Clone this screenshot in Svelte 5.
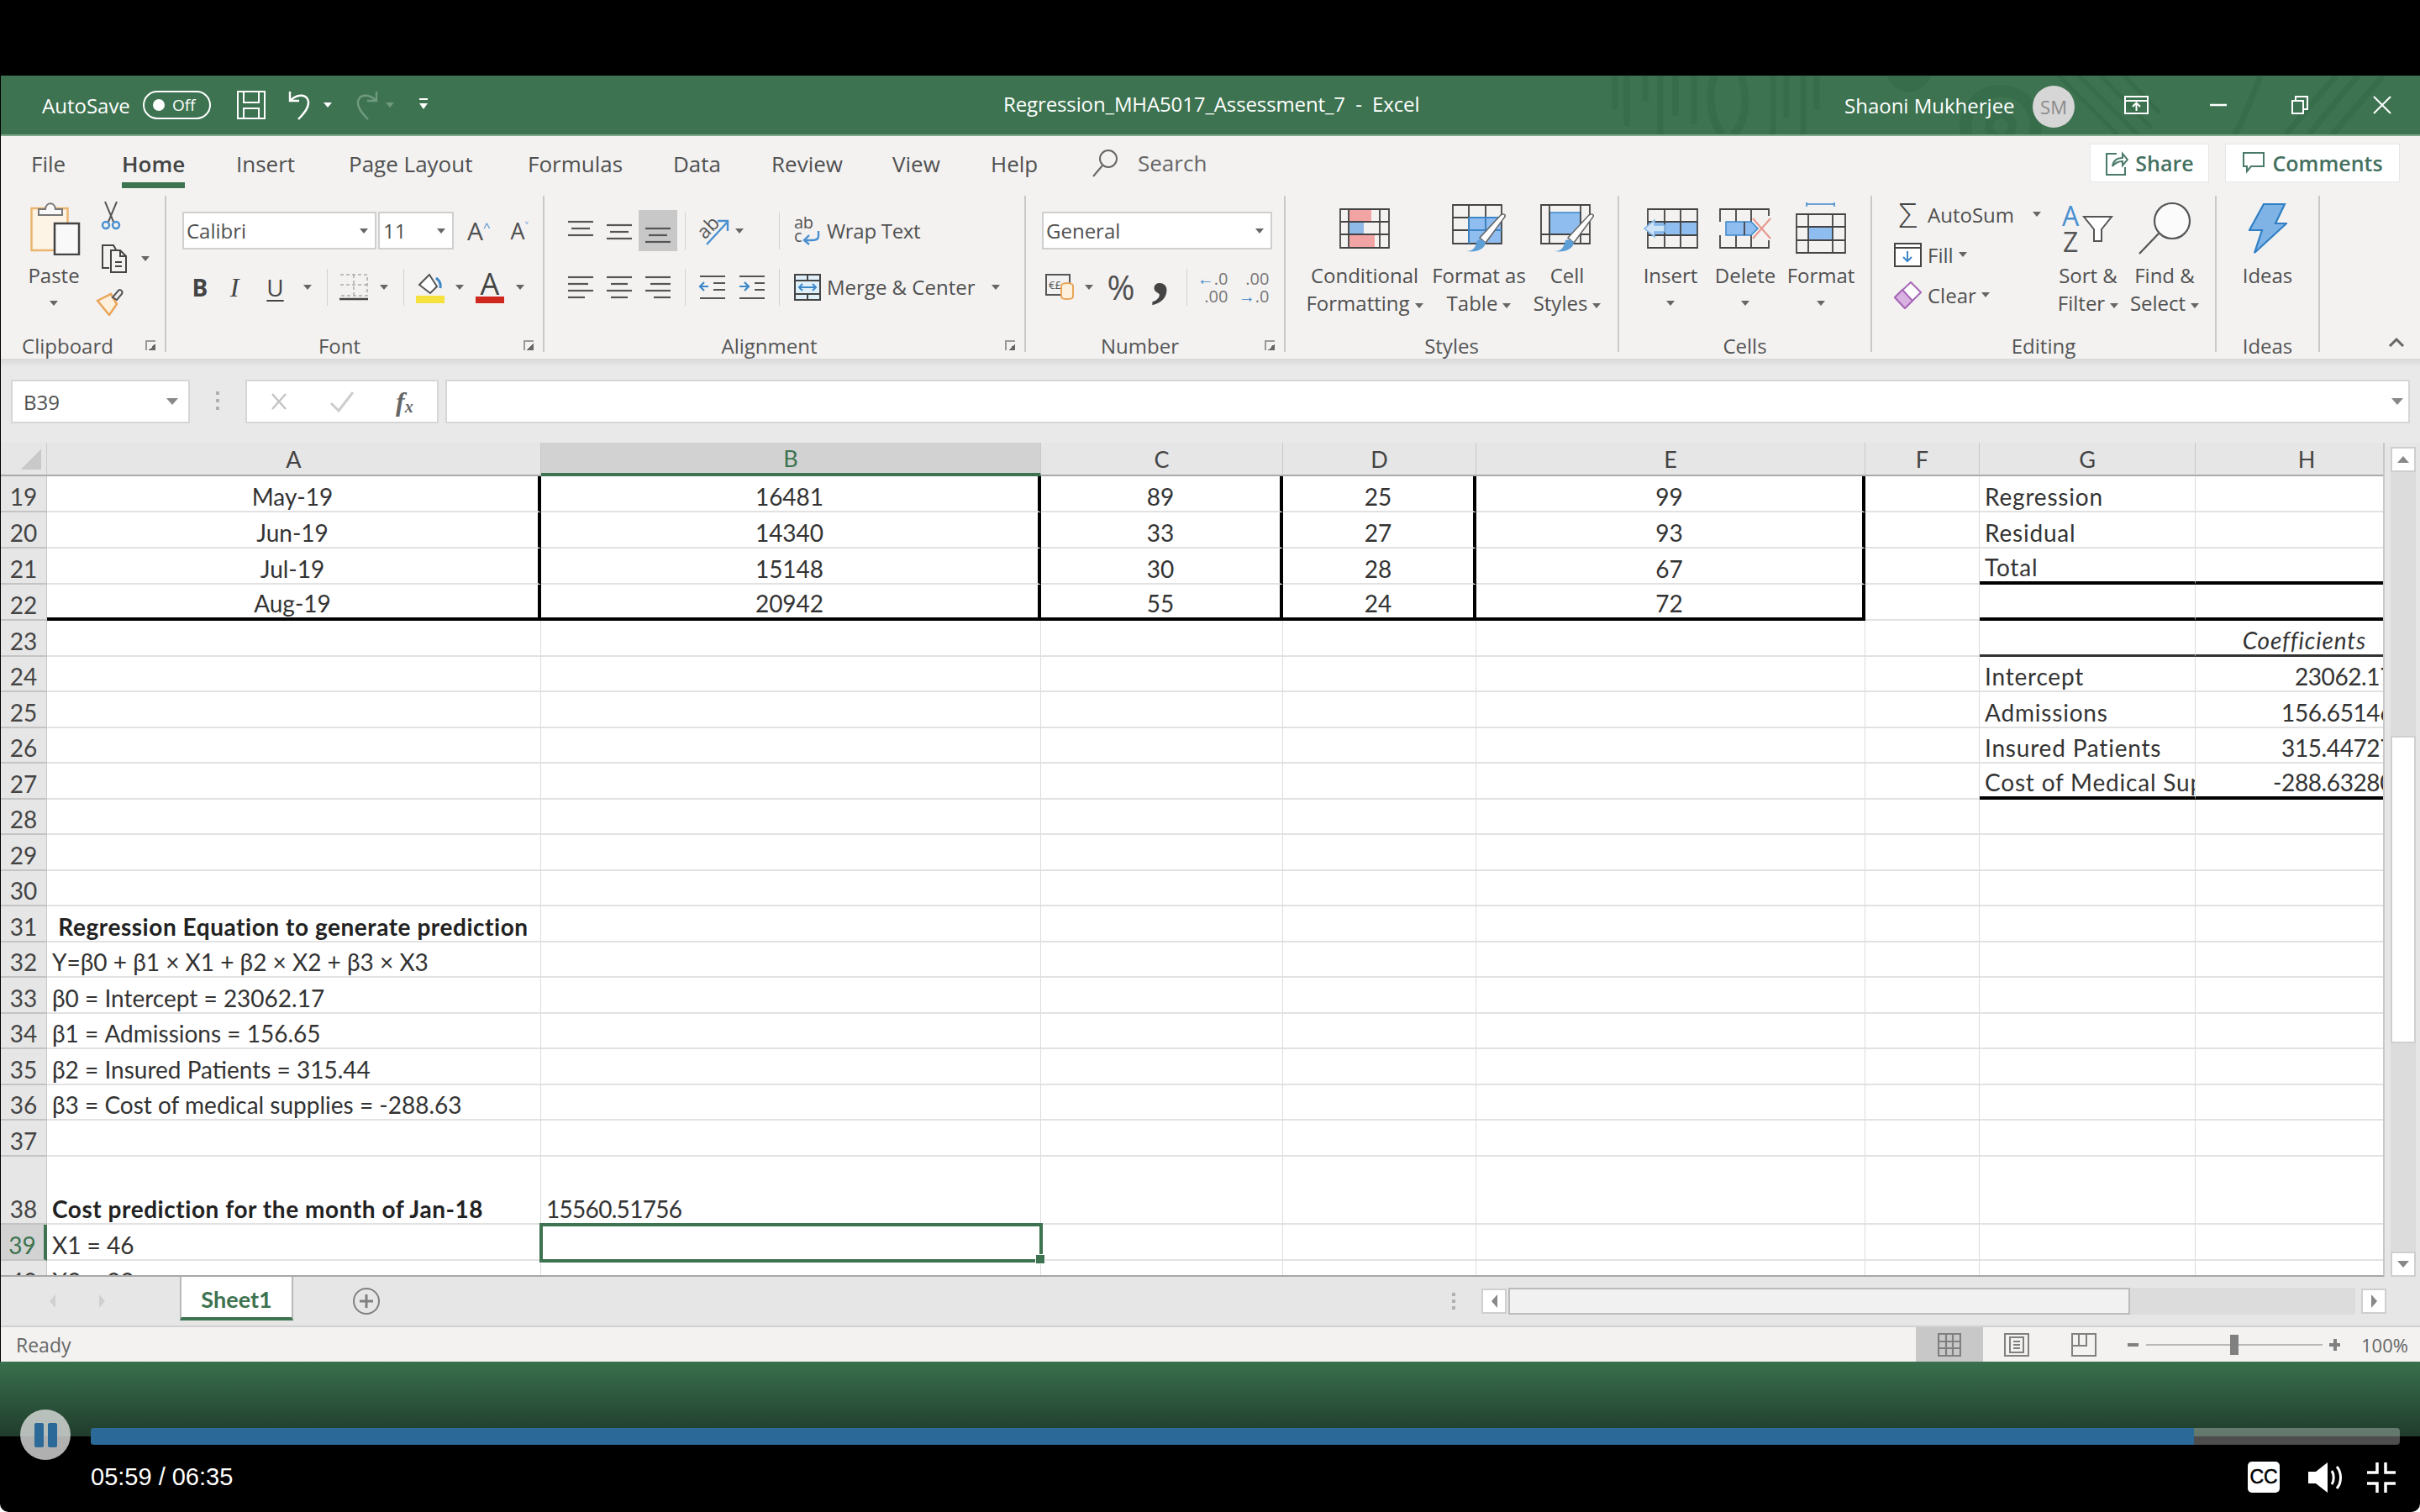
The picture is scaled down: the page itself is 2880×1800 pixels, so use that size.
<script>
  const columns = ["A", "B", "C", "D", "E", "F", "G", "H"];

  const filled = {
    19: ["May-19", "16481", "89", "25", "99", "", "Regression", ""],
    20: ["Jun-19", "14340", "33", "27", "93", "", "Residual", ""],
    21: ["Jul-19", "15148", "30", "28", "67", "", "Total", ""],
    22: ["Aug-19", "20942", "55", "24", "72", "", "", ""],
    23: ["", "", "", "", "", "", "", "Coefficients"],
    24: ["", "", "", "", "", "", "Intercept", "23062.17"],
    25: ["", "", "", "", "", "", "Admissions", "156.65146"],
    26: ["", "", "", "", "", "", "Insured Patients", "315.44727"],
    27: ["", "", "", "", "", "", "Cost of Medical Supplies", "-288.63280"],
    31: [" Regression Equation to generate prediction"],
    32: ["Y=β0 + β1 × X1 + β2 × X2 + β3 × X3"],
    33: ["β0 = Intercept = 23062.17"],
    34: ["β1 = Admissions = 156.65"],
    35: ["β2 = Insured Patients = 315.44"],
    36: ["β3 = Cost of medical supplies = -288.63"],
    38: ["Cost prediction for the month of Jan-18", "15560.51756"],
    39: ["X1 = 46"],
    40: ["X2 = 33"],
  };

  const rowNumbers = Array.from({ length: 22 }, (_, i) => 19 + i);

  const cellClass = (row, col) => {
    const out = [];
    if (row <= 22 && col <= 4) out.push("center", "thick-r");
    if (row === 22 && col <= 4) out.push("thick-b");
    if (col >= 6 && (row === 21 || row === 22 || row === 27)) out.push("thick-b");
    if (col >= 6 && row === 23) out.push("med-b");
    if (col === 6) out.push("label");
    if (col === 7) out.push("num");
    if (col === 7 && row === 23) out.push("coef");
    if (row === 31 || (row === 38 && col === 0)) out.push("bold");
    if (row === 38 && col === 1) out.push("digits");
    if (row === 39 && col === 1) out.push("active");
    return out.join(" ");
  };

  const tabs = [
    { label: "File", w: 108 },
    { label: "Home", w: 136, on: true },
    { label: "Insert", w: 134 },
    { label: "Page Layout", w: 213 },
    { label: "Formulas", w: 173 },
    { label: "Data", w: 117 },
    { label: "Review", w: 144 },
    { label: "View", w: 117 },
    { label: "Help", w: 120 },
  ];

  const playedPct = 91.08;
</script>

{#snippet lines(rows)}
  <svg width="34" height="32" viewBox="0 0 34 32" fill="none" stroke="#555" stroke-width="2.2">
    {#each rows as r}
      <path d="M{r[0]} {r[1]}H{r[2]}" />
    {/each}
  </svg>
{/snippet}

{#snippet brush()}
  <path d="M33 40L58 13c3-2 6-1 5 2L40 46z" fill="#fff" stroke="#666" stroke-width="1.6" />
  <path d="M17 56c7 0 11-3 13-13 4-2 8 0 10 3-1 7-10 12-23 10z" fill="#5f9fd8" />
{/snippet}

<div class="screen">
  <div class="letterbox"></div>

  <div class="excel">
    <header class="titlebar">
      <svg class="pattern" width="980" height="70" viewBox="0 0 980 70" fill="none" stroke="#386d4b">
        <path d="M22 0v40M36 0v60M58 0v30M76 0v70M94 0v48M116 0v58M210 0v70M226 0v50M246 0v70M262 0v40" stroke-width="7" />
        <path d="M140 0c-10 30 0 60 10 70M172 0c10 30 4 60-10 70" stroke-width="9" />
        <path d="M345 0c14 26 38 26 55 0z" fill="#386d4b" stroke-width="0" />
        <circle cx="481" cy="60" r="42" stroke-width="14" />
        <circle cx="481" cy="60" r="14" stroke-width="10" />
        <path d="M550 0l70 70M574 0l70 70M600 0l60 62M628 0l42 44" stroke-width="5" />
        <path d="M790 0c-10 30-20 50-30 70M880 0l-60 70M906 0l-58 70M936 0l-60 70" stroke-width="7" />
      </svg>

      <div class="tb-left">
        <span class="autosave">AutoSave</span>
        <span class="toggle"><i></i>Off</span>
        <svg class="save" width="34" height="34" viewBox="0 0 34 34" fill="none" stroke="#fff" stroke-width="2">
          <path d="M1 1h32v32H1zM8 1v13h18V1M8 33V21h18v12" />
        </svg>
        <svg class="undo" width="34" height="36" viewBox="0 0 34 36" fill="none" stroke="#fff" stroke-width="2.4">
          <path d="M2 2v11h11M2 13c8-8 18-8 21-2 4 8-4 17-11 24" />
        </svg>
        <span class="caret white undo-caret"></span>
        <svg class="redo" width="34" height="36" viewBox="0 0 34 36" fill="none" stroke="#6f9a80" stroke-width="2.4">
          <path d="M32 2v11H21M32 13c-8-8-18-8-21-2-4 8 4 17 11 24" />
        </svg>
        <span class="caret dim redo-caret"></span>
        <svg class="custom" width="12" height="18" viewBox="0 0 12 18" fill="#fff">
          <path d="M1 1h10v2H1zM1 7h10l-5 7z" />
        </svg>
      </div>
      <div class="tb-title">Regression_MHA5017_Assessment_7&nbsp; - &nbsp;Excel</div>
      <div class="tb-right">
        <span class="user">Shaoni Mukherjee</span>
        <span class="avatar">SM</span>
        <svg class="ribbon-opt" width="29" height="22" viewBox="0 0 29 22" fill="none" stroke="#fff" stroke-width="2">
          <path d="M1 1h27v20H1zM1 6h27M14.500 18V9M10 13l4.500-4.500L19 13" />
        </svg>
        <svg class="minimize" width="20" height="4" viewBox="0 0 20 4"><path d="M0 2h20" stroke="#fff" stroke-width="2.500" /></svg>
        <svg class="restore" width="20" height="22" viewBox="0 0 20 22" fill="none" stroke="#fff" stroke-width="2">
          <path d="M1 6h13v15H1zM5 6V1h14v15h-5" />
        </svg>
        <svg class="close" width="22" height="22" viewBox="0 0 22 22" stroke="#fff" stroke-width="2"><path d="M1 1l20 20M21 1L1 21" /></svg>
      </div>
    </header>

    <nav class="tabs">
      {#each tabs as t}
        <span class="tab" class:on={t.on} style="width:{t.w}px"><span class="tab-text">{t.label}</span></span>
      {/each}
      <svg class="search-ico" width="32" height="34" viewBox="0 0 32 34" fill="none" stroke="#666" stroke-width="2">
        <circle cx="20" cy="12" r="10" /><path d="M13 20L2 33" />
      </svg>
      <span class="search">Search</span>
      <span class="share-wrap">
        <span class="pill share">
          <svg width="28" height="30" viewBox="0 0 28 30" fill="none" stroke="#4a7a68" stroke-width="2">
            <path d="M14 4H2v25h22v-9M9 19c1-7 6-10 12-10V4l6 7-6 7v-5c-5 0-9 2-12 6z" />
          </svg>
          Share
        </span>
        <span class="pill comments">
          <svg width="28" height="28" viewBox="0 0 28 28" fill="none" stroke="#4a7a68" stroke-width="2">
            <path d="M2 2h24v16H11l-5 6v-6H2z" />
          </svg>
          Comments
        </span>
      </span>
    </nav>

    <section class="ribbon">
      <div class="group clipboard">
        <div class="body">
          <div class="big paste">
            <div class="big-ico">
              <svg width="60" height="64" viewBox="0 0 60 64">
                <rect x="1.500" y="8" width="43" height="50" fill="#fdf4e6" stroke="#ebb56e" stroke-width="2.500" />
                <path d="M10 16V9h8c1-9 11-9 12 0h8v7z" fill="#f8f8f8" stroke="#777" stroke-width="2" />
                <rect x="29" y="26" width="29" height="37" fill="#f9f9f9" stroke="#444" stroke-width="2.500" />
              </svg>
            </div>
            <div>Paste</div>
            <div class="caret-line"><span class="caret"></span></div>
          </div>
          <div class="clip-col">
            <svg width="24" height="34" viewBox="0 0 24 34" fill="none">
              <path d="M5 0l10 24M19 0L9 24" stroke="#555" stroke-width="2" />
              <circle cx="6" cy="28" r="4" stroke="#4a90d0" stroke-width="2.500" />
              <circle cx="18" cy="28" r="4" stroke="#4a90d0" stroke-width="2.500" />
            </svg>
            <span class="with-caret">
              <svg width="36" height="36" viewBox="0 0 36 36" fill="none" stroke="#444" stroke-width="2">
                <path d="M10 29H2V2h13l3 5M12 8h11l7 7v19H12zM23 8v7h7M17 22h8M17 27h8" />
              </svg>
              <span class="caret"></span>
            </span>
            <svg width="36" height="34" viewBox="0 0 36 34" fill="none">
              <path d="M2 16L18 8l7 12-9 13z" fill="#fdf0dc" stroke="#e9a55a" stroke-width="2.500" />
              <path d="M20 12l6-7c2-4 7-1 5 3l-6 7z" fill="#eee" stroke="#555" stroke-width="2" />
            </svg>
          </div>
        </div>
        <div class="g-label"><span>Clipboard</span><i class="launcher"></i></div>
      </div>

      <div class="group font">
        <div class="body col">
          <div class="font-row1">
            <span class="combo font-name">Calibri<span class="caret"></span></span>
            <span class="combo font-size">11<span class="caret"></span></span>
            <span class="grow">A<sup>^</sup></span>
            <span class="shrink">A<sup>˅</sup></span>
          </div>
          <div class="font-row2">
            <b class="fmt">B</b>
            <i class="fmt italic">I</i>
            <u class="fmt under">U</u>
            <span class="caret"></span>
            <span class="vsep"></span>
            <svg width="34" height="32" viewBox="0 0 34 32" fill="none">
              <path d="M1 1h32v25H1M17 1v25M1 13h32" stroke="#aaa" stroke-width="1.500" stroke-dasharray="4 3" />
              <path d="M0 30h34" stroke="#444" stroke-width="2.500" />
            </svg>
            <span class="caret"></span>
            <span class="vsep"></span>
            <svg width="36" height="38" viewBox="0 0 36 38" fill="none">
              <path d="M4 16L16 4l9 14-8 8z" fill="#fff" stroke="#555" stroke-width="2" />
              <path d="M24 8c4 3 6 7 5 12" stroke="#3d87c9" stroke-width="3" />
              <rect y="29" width="34" height="9" fill="#f5e23c" />
            </svg>
            <span class="caret"></span>
            <span class="color-a">A</span>
            <span class="caret"></span>
          </div>
        </div>
        <div class="g-label"><span>Font</span><i class="launcher"></i></div>
      </div>

      <div class="group alignment">
        <div class="body">
          <div class="align-grid">
            <span class="slot">{@render lines([[2, 5, 32], [6, 13, 28], [2, 21, 32]])}</span>
            <span class="slot">{@render lines([[2, 9, 32], [6, 17, 28], [2, 25, 32]])}</span>
            <span class="slot active-btn">{@render lines([[2, 13, 32], [6, 21, 28], [2, 29, 32]])}</span>
            <span class="vsep"></span>
            <span class="slot orient">
              <svg width="38" height="36" viewBox="0 0 38 36" fill="none">
                <text x="0" y="22" transform="rotate(-45 12 16)" class="svg-text" font-size="23" fill="#555">ab</text>
                <path d="M10 34L34 8M23 6h12v12" stroke="#4a90d0" stroke-width="2.400" />
              </svg>
              <span class="caret"></span>
            </span>
            <span class="vsep"></span>
            <span class="wide wrap-text">
              <span class="wide-ico">
                <svg width="32" height="34" viewBox="0 0 32 34" fill="none">
                  <text x="0" y="14" class="svg-text" font-size="20" fill="#555">ab</text>
                  <text x="0" y="30" class="svg-text" font-size="20" fill="#555">c</text>
                  <path d="M29 17v6c0 4-4 5-7 5H13M18 22l-6 6 6 5" stroke="#4a90d0" stroke-width="2.400" />
                </svg>
              </span>
              Wrap Text
            </span>

            <span class="slot">{@render lines([[2, 4, 32], [2, 12, 26], [2, 20, 32], [2, 28, 22]])}</span>
            <span class="slot">{@render lines([[2, 4, 32], [7, 12, 27], [2, 20, 32], [7, 28, 27]])}</span>
            <span class="slot">{@render lines([[2, 4, 32], [8, 12, 32], [2, 20, 32], [12, 28, 32]])}</span>
            <span class="vsep"></span>
            <span class="slot">
              <svg width="34" height="32" viewBox="0 0 34 32" fill="none" stroke="#555" stroke-width="2.200">
                <path d="M2 3h30M18 11h14M18 19h14M2 29h30" />
                <path d="M12 15H2M7 10l-5 5 5 5" stroke="#3d87c9" />
              </svg>
            </span>
            <span class="slot">
              <svg width="34" height="32" viewBox="0 0 34 32" fill="none" stroke="#555" stroke-width="2.200">
                <path d="M2 3h30M20 11h12M20 19h12M2 29h30" />
                <path d="M2 15h10M8 10l5 5-5 5" stroke="#3d87c9" />
              </svg>
            </span>
            <span class="vsep"></span>
            <span class="wide">
              <span class="wide-ico">
                <svg width="32" height="32" viewBox="0 0 32 32" fill="none">
                  <rect x="1" y="1" width="30" height="30" fill="#dff0fa" stroke="#444" stroke-width="2" />
                  <path d="M1 8h30M1 24h30M16 1v7M16 24v7" stroke="#444" stroke-width="2" />
                  <path d="M6 16h20M10 12l-4 4 4 4M22 12l4 4-4 4" stroke="#3d87c9" stroke-width="2" />
                </svg>
              </span>
              Merge &amp; Center
              <span class="caret merge-caret"></span>
            </span>
          </div>
        </div>
        <div class="g-label"><span>Alignment</span><i class="launcher"></i></div>
      </div>

      <div class="group number">
        <div class="body col">
          <span class="combo general">General<span class="caret"></span></span>
          <div class="num-row">
            <svg width="36" height="32" viewBox="0 0 36 32" fill="none">
              <rect x="1" y="1" width="28" height="24" fill="#f2f2f2" stroke="#555" stroke-width="2" />
              <text x="4" y="18" class="svg-text" font-size="13" fill="#555">€£</text>
              <ellipse cx="26" cy="14" rx="7" ry="3" fill="#fdf0dc" stroke="#e9a55a" stroke-width="2" />
              <path d="M19 14v13c0 4 14 4 14 0V14" fill="#fdf0dc" stroke="#e9a55a" stroke-width="2" />
            </svg>
            <span class="caret"></span>
            <span class="pct">%</span>
            <span class="comma">,</span>
            <span class="vsep"></span>
            <span class="dec">
              <span><em>←</em>.0</span>
              <span>.00</span>
            </span>
            <span class="dec">
              <span>.00</span>
              <span><em>→</em>.0</span>
            </span>
          </div>
        </div>
        <div class="g-label"><span>Number</span><i class="launcher"></i></div>
      </div>

      <div class="group styles">
        <div class="body">
          <div class="big cond">
            <div class="big-ico">
              <svg width="60" height="48" viewBox="0 0 60 48" fill="none">
                <rect x="11" y="1" width="27" height="15" fill="#f2a3a3" />
                <rect x="11" y="17" width="18" height="14" fill="#8fb9e6" />
                <rect x="11" y="31" width="31" height="16" fill="#f2a3a3" />
                <path d="M1 1h58v46H1zM11 1v46M48 1v46M1 16h58M1 31h58" stroke="#444" stroke-width="1.800" />
              </svg>
            </div>
            <div>Conditional</div>
            <div>Formatting<span class="caret inline"></span></div>
          </div>
          <div class="big fmt-table">
            <div class="big-ico">
              <svg width="64" height="58" viewBox="0 0 64 58" fill="none">
                <rect x="20" y="15" width="39" height="32" fill="#8fbdf0" />
                <path d="M1 1h58v46H1zM20 1v46M40 1v46M1 16h58M1 31h58" stroke="#444" stroke-width="1.800" />
                <path d="M20 16h39M20 31h39M40 16v31M20 16v31" stroke="#3d87c9" stroke-width="1.800" />
                {@render brush()}
              </svg>
            </div>
            <div>Format as</div>
            <div>Table<span class="caret inline"></span></div>
          </div>
          <div class="big cell-st">
            <div class="big-ico">
              <svg width="64" height="58" viewBox="0 0 64 58" fill="none">
                <rect x="11" y="10" width="37" height="26" fill="#8fbdf0" stroke="#3d87c9" stroke-width="1.500" />
                <path d="M1 1h58v46H1zM11 1v46M48 1v46M1 36h58" stroke="#444" stroke-width="1.800" />
                {@render brush()}
              </svg>
            </div>
            <div>Cell</div>
            <div>Styles<span class="caret inline"></span></div>
          </div>
        </div>
        <div class="g-label plain"><span>Styles</span></div>
      </div>

      <div class="group cells">
        <div class="body">
          <div class="big insert">
            <div class="big-ico">
              <svg width="66" height="48" viewBox="0 0 66 48" fill="none">
                <rect x="6" y="16" width="59" height="16" fill="#8fbdf0" />
                <path d="M6 1h59v46H6zM26 1v46M45 1v46M6 16h59M6 32h59" stroke="#444" stroke-width="1.800" />
                <path d="M26 20H14v-6L2 24l12 10v-6h12z" fill="#cfe3f7" stroke="#7fb3e6" stroke-width="1.500" />
              </svg>
            </div>
            <div>Insert</div>
            <div class="caret-line"><span class="caret"></span></div>
          </div>
          <div class="big delete">
            <div class="big-ico">
              <svg width="62" height="48" viewBox="0 0 62 48" fill="none">
                <path d="M1 16V1h58v8M1 32v15h58v-9M20 1v15M38 1v15M20 32v15M38 32v15" stroke="#444" stroke-width="1.800" />
                <path d="M8 16h30l8 8-8 8H8z" fill="#8fbdf0" stroke="#3d87c9" stroke-width="1.500" />
                <path d="M30 16v16" stroke="#444" stroke-width="1.800" />
                <path d="M40 12l21 24M61 12L40 36" stroke="#e8968c" stroke-width="2" />
              </svg>
            </div>
            <div>Delete</div>
            <div class="caret-line"><span class="caret"></span></div>
          </div>
          <div class="big format">
            <div class="big-ico">
              <svg width="60" height="62" viewBox="0 0 60 62" fill="none">
                <path d="M13 2h33M13 0v5M46 0v5" stroke="#3d87c9" stroke-width="1.500" />
                <rect x="15" y="29" width="29" height="16" fill="#8fbdf0" />
                <path d="M1 14h58v46H1zM15 14v46M44 14v46M1 29h58M1 45h58" stroke="#444" stroke-width="1.800" />
              </svg>
            </div>
            <div>Format</div>
            <div class="caret-line"><span class="caret"></span></div>
          </div>
        </div>
        <div class="g-label plain"><span>Cells</span></div>
      </div>

      <div class="group editing">
        <div class="body">
          <div class="edit-col">
            <div class="edit-item">
              <span class="edit-ico sigma">Σ</span>AutoSum<span class="caret sum-caret"></span>
            </div>
            <div class="edit-item">
              <span class="edit-ico">
                <svg width="33" height="29" viewBox="0 0 33 29" fill="none">
                  <rect x="1" y="1" width="31" height="27" fill="#fff" stroke="#444" stroke-width="2" />
                  <path d="M1 6h31" stroke="#444" stroke-width="2" />
                  <path d="M16 10v12M11 17l5 5 5-5" stroke="#3d87c9" stroke-width="2" />
                </svg>
              </span>Fill<span class="caret inline"></span>
            </div>
            <div class="edit-item">
              <span class="edit-ico">
                <svg width="33" height="33" viewBox="0 0 33 33" fill="none">
                  <path d="M1 19L20 1l12 12-19 19z" fill="#fff" stroke="#a868b8" stroke-width="2" />
                  <path d="M1 19l9-9 12 13-9 9z" fill="#d9b2e2" stroke="#a868b8" stroke-width="2" />
                </svg>
              </span>Clear<span class="caret inline"></span>
            </div>
          </div>
          <div class="big sort">
            <div class="big-ico">
              <svg width="62" height="60" viewBox="0 0 62 60" fill="none">
                <text x="0" y="27" class="svg-text" font-size="32" fill="#4a90d0">A</text>
                <text x="1" y="58" class="svg-text" font-size="32" fill="#555">Z</text>
                <path d="M26 16h33L47 31v14h-9V31z" fill="#fff" stroke="#555" stroke-width="2" />
              </svg>
            </div>
            <div>Sort &amp;</div>
            <div>Filter<span class="caret inline"></span></div>
          </div>
          <div class="big find">
            <div class="big-ico">
              <svg width="64" height="62" viewBox="0 0 64 62" fill="none" stroke="#555" stroke-width="2.200">
                <circle cx="41" cy="22" r="21" fill="#fbfbfb" />
                <path d="M25 37L2 61" />
              </svg>
            </div>
            <div>Find &amp;</div>
            <div>Select<span class="caret inline"></span></div>
          </div>
        </div>
        <div class="g-label plain"><span>Editing</span></div>
      </div>

      <div class="group ideas">
        <div class="body">
          <div class="big idea-btn">
            <div class="big-ico">
              <svg width="46" height="60" viewBox="0 0 46 60">
                <path d="M18 1h25L32 24h13L7 59l9-27H1z" fill="#7fb3e6" stroke="#2f7fc4" stroke-width="2.200" />
              </svg>
            </div>
            <div>Ideas</div>
          </div>
        </div>
        <div class="g-label plain"><span>Ideas</span></div>
      </div>

      <div class="collapse">
        <svg width="20" height="12" viewBox="0 0 20 12" fill="none" stroke="#666" stroke-width="3"><path d="M2 11l8-8 8 8" /></svg>
      </div>
    </section>

    <div class="formula-bar">
      <div class="namebox">B39<span class="caret big-caret"></span></div>
      <div class="dots"><i></i><i></i><i></i></div>
      <div class="fx-box">
        <svg width="20" height="22" viewBox="0 0 20 22" stroke="#c4c4c4" stroke-width="2.500"><path d="M2 2l16 18M18 2L2 20" /></svg>
        <svg class="check" width="30" height="26" viewBox="0 0 30 26" fill="none" stroke="#cdcdcd" stroke-width="3"><path d="M2 15l9 9L28 2" /></svg>
        <span class="fx">f<sub>x</sub></span>
      </div>
      <div class="input">
        <span class="caret big-caret"></span>
      </div>
    </div>

    <div class="sheet-area">
      <div class="sheet">
        <div class="corner"><i></i></div>
        {#each columns as c, i}
          <div class="col-head" class:sel={i === 1} class:last={i === 7}>{c}</div>
        {/each}

        {#each rowNumbers as n}
          <div class="row-head" class:sel={n === 39}>{n}</div>
          {#each columns as c, i}
            <div class="cell {cellClass(n, i)}"><span>{filled[n]?.[i] ?? ""}</span></div>
          {/each}
        {/each}
      </div>
      <div class="vscroll">
        <span class="sb-btn"><span class="tri up"></span></span>
        <div class="vtrack"><div class="vthumb"></div></div>
        <span class="sb-btn"><span class="tri down"></span></span>
      </div>
    </div>

    <div class="tabbar">
      <span class="tri left"></span>
      <span class="tri right"></span>
      <span class="sheet-tab">Sheet1</span>
      <svg class="add" width="34" height="34" viewBox="0 0 34 34" fill="none" stroke="#808080" stroke-width="2">
        <circle cx="17" cy="17" r="15" /><path d="M17 9v16M9 17h16" stroke-width="3" />
      </svg>
      <div class="dots h"><i></i><i></i><i></i></div>
      <div class="hscroll">
        <span class="sb-btn"><span class="tri left dark"></span></span>
        <div class="htrack"><div class="hthumb"></div></div>
        <span class="sb-btn"><span class="tri right dark"></span></span>
      </div>
    </div>

    <footer class="status">
      <span class="ready">Ready</span>
      <div class="view-btns">
        <span class="view on">
          <svg width="28" height="28" viewBox="0 0 28 28" fill="none" stroke="#808080" stroke-width="2.200"><path d="M1 1h26v26H1zM10 1v26M18 1v26M1 10h26M1 18h26" /></svg>
        </span>
        <span class="view">
          <svg width="30" height="28" viewBox="0 0 30 28" fill="none" stroke="#808080" stroke-width="2"><path d="M1 1h28v26H1zM7 5h16v18H7zM11 10h8M11 14h8M11 18h8" /></svg>
        </span>
        <span class="view">
          <svg width="30" height="28" viewBox="0 0 30 28" fill="none" stroke="#808080" stroke-width="2"><path d="M1 1h28v26H1zM1 15h17V1M9 1v14" /></svg>
        </span>
      </div>
      <div class="zoomer">
        <i class="zm minus"></i>
        <div class="zline"><i class="zthumb"></i></div>
        <i class="zm plus"></i>
        <span class="zpct">100%</span>
      </div>
    </footer>
  </div>

  <div class="video-fade"></div>

  <div class="player">
    <div class="player-row">
      <button class="pause" aria-label="Pause"><i></i><i></i></button>
      <div class="progress"><div class="played" style="width:{playedPct}%"></div></div>
    </div>
    <div class="player-row lower">
      <span class="time">05:59 / 06:35</span>
      <span class="cc">CC</span>
      <svg class="speaker" width="42" height="36" viewBox="0 0 42 36" fill="#fff">
        <path d="M0 11h9L23 0v36L9 25H0z" />
        <path d="M28 10c3 4 3 12 0 16M34 5c6 7 6 19 0 26" fill="none" stroke="#fff" stroke-width="3" />
      </svg>
      <svg class="exit-fs" width="34" height="36" viewBox="0 0 34 36" fill="none" stroke="#fff" stroke-width="3.500">
        <path d="M12 0v12H0M22 0v12h12M12 36V25H0M22 36V25h12" />
      </svg>
    </div>
  </div>
</div>

<style>
  :global(body) {
    margin: 0;
    background: #fff;
  }

  .screen {
    --ui: "Open Sans", "Noto Sans", sans-serif;
    --cell: Lato, "Noto Sans", sans-serif;
    --green: #3d7350;
    --txt: #505050;
    position: relative;
    display: flex;
    flex-direction: column;
    width: 2880px;
    height: 1800px;
    overflow: hidden;
    background: #000;
    border-radius: 0 0 10px 10px;
    font-family: var(--ui);
    color: var(--txt);
  }

  .letterbox {
    height: 90px;
    flex: none;
  }

  .excel {
    display: flex;
    flex-direction: column;
    height: 1531px;
    flex: none;
    margin-left: 1px;
    background: #f3f2f1;
  }

  /* title bar */
  .titlebar {
    position: relative;
    display: flex;
    align-items: center;
    height: 72px;
    box-sizing: border-box;
    flex: none;
    border-bottom: 2px solid #7fa88f;
    background: var(--green);
    color: #fff;
    font-size: 24px;
  }

  .pattern {
    position: absolute;
    right: 0;
    top: 0;
  }

  .tb-left {
    position: relative;
    display: flex;
    align-items: center;
    width: 1193px;
    padding-left: 49px;
    box-sizing: border-box;
  }

  .autosave {
    width: 120px;
  }

  .toggle {
    display: flex;
    align-items: center;
    gap: 9px;
    box-sizing: border-box;
    width: 81px;
    height: 34px;
    padding-left: 10px;
    border: 2.5px solid #fff;
    border-radius: 17px;
    font-size: 19px;
  }

  .toggle i {
    width: 14px;
    height: 14px;
    border-radius: 50%;
    background: #fff;
  }

  .save {
    margin-left: 31px;
  }

  .undo {
    margin-left: 27px;
  }

  .undo-caret {
    margin-left: 8px;
  }

  .redo {
    margin-left: 21px;
  }

  .redo-caret {
    margin-left: 9px;
  }

  .custom {
    margin-left: 29px;
  }

  .tb-title {
    position: relative;
    width: 1001px;
    margin-top: -3px;
    letter-spacing: -0.12px;
    white-space: nowrap;
  }

  .tb-right {
    position: relative;
    display: flex;
    align-items: center;
  }

  .user {
    width: 224px;
    white-space: nowrap;
  }

  .avatar {
    display: flex;
    align-items: center;
    justify-content: center;
    width: 50px;
    height: 50px;
    margin-top: 4px;
    border-radius: 50%;
    background: #d6d6d6;
    color: #8a8a8a;
    font-size: 22px;
  }

  .ribbon-opt {
    margin-left: 59px;
  }

  .minimize {
    margin-left: 73px;
  }

  .restore {
    margin-left: 77px;
  }

  .close {
    margin-left: 77px;
  }

  /* tabs */
  .tabs {
    display: flex;
    align-items: center;
    height: 63px;
    flex: none;
    padding-left: 36px;
    font-size: 26px;
  }

  .tab {
    display: block;
    flex: none;
    white-space: nowrap;
  }

  .tab-text {
    display: inline-block;
    padding: 0 0 3px;
    line-height: 38px;
    margin-top: 12px;
    border-bottom: 7px solid transparent;
  }

  .tab.on .tab-text {
    border-bottom-color: var(--green);
    font-weight: 600;
    color: #444;
  }

  .search-ico {
    margin-right: 23px;
  }

  .search {
    color: #666;
  }

  .share-wrap {
    display: flex;
    gap: 19px;
    margin-left: auto;
    margin-right: 24px;
  }

  .pill {
    display: flex;
    align-items: center;
    justify-content: center;
    gap: 8px;
    box-sizing: border-box;
    height: 46px;
    background: #fff;
    border: 1px solid #e6e6e6;
    color: #44705f;
    font-weight: 600;
    font-size: 25px;
  }

  .share {
    width: 142px;
  }

  .comments {
    width: 208px;
  }

  /* ribbon */
  .ribbon {
    display: flex;
    height: 202px;
    flex: none;
    box-sizing: border-box;
    padding-top: 8px;
    font-size: 24px;
    line-height: 33px;
  }

  .group {
    display: flex;
    flex-direction: column;
    box-sizing: border-box;
    height: 186px;
    border-right: 2px solid #c9c9c9;
  }

  .clipboard { width: 197px; }
  .font { width: 450px; }
  .alignment { width: 573px; }
  .number { width: 309px; }
  .styles { width: 397px; }
  .cells { width: 301px; }
  .editing { width: 410px; }
  .ideas { width: 123px; }

  .body {
    display: flex;
    flex: 1;
    min-height: 0;
  }

  .body.col {
    flex-direction: column;
  }

  .g-label {
    display: flex;
    align-items: center;
    height: 24px;
    margin-bottom: -4px;
    color: #555;
  }

  .g-label span {
    flex: 1;
    text-align: center;
    white-space: nowrap;
  }

  .launcher {
    width: 12px;
    height: 12px;
    margin: 0 11px 0 13px;
    border-left: 2px solid #999;
    border-top: 2px solid #999;
    box-sizing: border-box;
    background: linear-gradient(135deg, transparent 60%, #666 60%);
  }

  .big {
    display: flex;
    flex-direction: column;
    align-items: center;
    flex: none;
    white-space: nowrap;
  }

  .big-ico {
    display: flex;
    align-items: center;
    justify-content: center;
    height: 78px;
  }

  .caret {
    display: inline-block;
    flex: none;
    width: 0;
    height: 0;
    border-style: solid;
    border-width: 6px 5.5px 0;
    border-color: #666 transparent transparent;
  }

  .caret.white {
    border-top-color: #fff;
  }

  .caret.dim {
    border-top-color: #6f9a80;
  }

  .caret.inline {
    margin-left: 6px;
    vertical-align: 3px;
  }

  .caret-line {
    display: flex;
    align-items: center;
    height: 33px;
  }

  .paste {
    width: 90px;
    margin-left: 18px;
  }

  .paste svg {
    margin-left: 3px;
  }

  .clip-col {
    display: flex;
    flex-direction: column;
    align-items: flex-start;
    gap: 16px;
    margin-left: 5px;
    padding-top: 7px;
  }

  .clip-col svg:first-child {
    margin-left: 6px;
  }

  .with-caret {
    display: flex;
    align-items: center;
    gap: 12px;
  }

  .combo {
    display: flex;
    align-items: center;
    justify-content: space-between;
    box-sizing: border-box;
    height: 45px;
    padding: 0 8px 0 3px;
    background: #fff;
    border: 2px solid #cfcfcf;
  }

  .font-row1 {
    display: flex;
    align-items: center;
    margin: 19px 0 0 19px;
    gap: 2px;
  }

  .font-name {
    width: 231px;
  }

  .font-size {
    width: 90px;
    padding-left: 4px;
  }

  .grow,
  .shrink {
    font-size: 30px;
    white-space: nowrap;
  }

  .grow {
    margin-left: 14px;
  }

  .shrink {
    margin-left: 22px;
    font-size: 27px;
  }

  sup {
    color: #3d87c9;
    font-size: 15px;
    vertical-align: 10px;
    line-height: 0;
  }

  .font-row2 {
    display: grid;
    grid-template-columns: 42px 40px 57px 20px 26px 38px 34px 12px 54px 14px 58px 14px;
    align-items: center;
    justify-items: center;
    height: 40px;
    margin: 23px 0 0 19px;
  }

  .vsep {
    width: 1px;
    height: 44px;
    background: #d2d2d2;
  }

  .fmt {
    color: #444;
    font-size: 28px;
  }

  .italic {
    font-family: "Liberation Serif", serif;
    font-size: 32px;
    font-weight: 400;
  }

  .under {
    font-weight: 400;
    text-underline-offset: 4px;
  }

  .color-a {
    display: block;
    width: 34px;
    height: 38px;
    border-bottom: 8px solid #d0281e;
    box-sizing: border-box;
    text-align: center;
    font-size: 36px;
    line-height: 30px;
    color: #444;
  }

  .align-grid {
    display: grid;
    grid-template-columns: 45px 47px 46px 18px 48px 46px 18px auto;
    grid-template-rows: 49px 49px;
    row-gap: 18px;
    align-items: center;
    justify-items: center;
    margin: 17px 0 0 20px;
  }

  .slot {
    display: flex;
    align-items: center;
    justify-content: center;
  }

  .active-btn {
    width: 46px;
    height: 49px;
    background: #c8c8c8;
  }

  .orient {
    grid-column: span 2;
    gap: 6px;
    justify-self: start;
    margin-left: 7px;
  }

  .wide {
    display: flex;
    align-items: center;
    justify-self: start;
    padding-left: 5px;
    white-space: nowrap;
  }

  .wrap-text {
    letter-spacing: -0.3px;
  }

  .wide-ico {
    display: flex;
    justify-content: center;
    width: 40px;
    margin-right: 3px;
  }

  .merge-caret {
    margin-left: 20px;
  }

  .general {
    width: 274px;
    margin: 19px 0 0 19px;
  }

  .num-row {
    display: grid;
    grid-template-columns: 44px 24px 52px 42px 20px 42px 56px;
    align-items: center;
    justify-items: center;
    height: 44px;
    margin: 23px 0 0 19px;
  }

  .pct {
    font-size: 40px;
    line-height: 44px;
  }

  .comma {
    height: 44px;
    font-size: 86px;
    font-weight: 700;
    line-height: 44px;
    color: #444;
    margin-top: -42px;
    font-family: "Liberation Serif", serif;
  }

  .dec {
    display: flex;
    flex-direction: column;
    align-items: flex-end;
    font-size: 20px;
    line-height: 21px;
    color: #777;
  }

  .dec em {
    color: #3d87c9;
    font-style: normal;
    font-weight: 700;
  }

  .cond { width: 144px; margin-left: 22px; }
  .fmt-table { width: 128px; }
  .cell-st { width: 82px; }

  .insert { width: 90px; margin-left: 16px; }
  .delete { width: 88px; }
  .format { width: 92px; }

  .edit-col {
    width: 187px;
    margin-top: -2px;
    margin-left: 26px;
    flex: none;
  }

  .edit-item {
    display: flex;
    align-items: center;
    height: 48px;
    white-space: nowrap;
  }

  .edit-ico {
    display: flex;
    justify-content: center;
    width: 33px;
    margin-right: 7px;
  }

  .sigma {
    font-size: 40px;
    font-weight: 300;
    color: #444;
  }

  .sum-caret {
    margin-left: 22px;
  }

  .edit-item .inline {
    margin-left: 6px;
  }

  .sort { width: 88px; }
  .find { width: 94px; }
  .idea-btn { width: 100%; }

  .collapse {
    flex: 1;
    display: flex;
    justify-content: flex-end;
    align-items: flex-end;
    height: 180px;
    padding-right: 18px;
  }

  .svg-text {
    font-family: var(--ui);
  }

  /* formula bar */
  .formula-bar {
    display: flex;
    align-items: flex-start;
    box-sizing: border-box;
    height: 100px;
    flex: none;
    padding: 25px 12px 0 12px;
    background: linear-gradient(#d9d9d9, #e9e9e9 10px);
  }

  .namebox,
  .fx-box,
  .input {
    display: flex;
    align-items: center;
    box-sizing: border-box;
    height: 52px;
    background: #fff;
    border: 2px solid #d6d6d6;
  }

  .namebox {
    justify-content: space-between;
    width: 213px;
    padding: 0 12px 0 13px;
    font-size: 24px;
  }

  .big-caret {
    border-width: 8px 7.5px 0;
    border-top-color: #888;
  }

  .dots {
    display: flex;
    flex-direction: column;
    align-items: center;
    gap: 5px;
    width: 66px;
    padding-top: 14px;
  }

  .dots i {
    width: 4px;
    height: 4px;
    background: #b0b0b0;
  }

  .fx-box {
    width: 230px;
    padding-left: 28px;
  }

  .check {
    margin-left: 50px;
  }

  .fx {
    margin-left: 49px;
    font-family: "Liberation Serif", serif;
    font-style: italic;
    font-weight: 700;
    font-size: 32px;
    color: #666;
  }

  .fx sub {
    font-size: 20px;
    vertical-align: -2px;
  }

  .input {
    flex: 1;
    justify-content: flex-end;
    margin-left: 8px;
    padding-right: 6px;
  }

  /* sheet */
  .sheet-area {
    display: flex;
    height: 993px;
    flex: none;
    background: #e6e6e6;
  }

  .sheet {
    display: grid;
    grid-template-columns: 55px 588px 595px 288px 230px 463px 136px 257px 225px;
    grid-template-rows: 40px repeat(4, 43px) repeat(15, 42.5px) 81px 43px 43px;
    width: 2837px;
    height: 993px;
    overflow: hidden;
    flex: none;
    border-bottom: 2px solid #a8a8a8;
    box-sizing: border-box;
    font-family: var(--cell);
    font-size: 28px;
    color: #333;
    background: #fff;
    border-right: 2px solid #c8c8c8;
  }

  .corner {
    display: flex;
    justify-content: flex-end;
    align-items: flex-end;
    padding: 0 6px 6px 0;
    background: #e6e6e6;
    border-bottom: 2px solid #aaa;
    border-right: 1px solid #ccc;
  }

  .corner i {
    width: 24px;
    height: 24px;
    background: linear-gradient(135deg, transparent 50%, #c9c9c9 50%);
  }

  .col-head {
    display: flex;
    align-items: center;
    justify-content: center;
    background: #e6e6e6;
    border-bottom: 2px solid #aaa;
    border-right: 1.5px solid #c8c8c8;
    color: #444;
    font-size: 27px;
  }

  .col-head.last {
    padding-left: 40px;
  }

  .col-head.sel {
    background: #d2d2d2;
    border-bottom: 4px solid var(--green);
    color: #3d7350;
  }

  .row-head {
    display: flex;
    align-items: flex-end;
    justify-content: center;
    background: #e6e6e6;
    border-bottom: 2px solid #c4c4c4;
    border-right: 1.5px solid #c8c8c8;
    box-sizing: border-box;
    line-height: 34px;
    color: #444;
    font-size: 28px;
  }

  .row-head.sel {
    background: #d2d2d2;
    border-right: 4px solid var(--green);
    color: #3d7350;
  }

  .cell {
    display: flex;
    align-items: flex-end;
    min-width: 0;
    box-sizing: border-box;
    padding-left: 6px;
    overflow: hidden;
    border-right: 1.5px solid #dcdcdc;
    border-bottom: 2px solid #e2e2e2;
    line-height: 34px;
    white-space: pre;
  }

  .cell.center {
    justify-content: center;
    padding-left: 0;
  }

  .cell.label {
    letter-spacing: 0.8px;
  }

  .cell.bold {
    font-weight: 700;
    letter-spacing: 0.55px;
    color: #222;
  }

  .cell.digits {
    letter-spacing: -0.7px;
  }

  .cell.thick-r {
    border-right: 4px solid #000;
  }

  .cell.thick-b {
    border-bottom: 4px solid #000;
  }

  .cell.med-b {
    border-bottom: 3px solid #333;
  }

  .cell.num {
    justify-content: flex-end;
    padding-left: 0;
    border-right: none;
    letter-spacing: -0.4px;
  }

  .cell.num span {
    margin-right: -10px;
  }

  .cell.coef {
    padding-right: 22px;
    font-style: italic;
    letter-spacing: 0.8px;
  }

  .cell.coef span {
    margin-right: 0;
  }

  .cell.active {
    position: relative;
    overflow: visible;
    outline: 4px solid var(--green);
    outline-offset: -2px;
    z-index: 2;
  }

  .cell.active::after {
    content: "";
    position: absolute;
    right: -6px;
    bottom: -6px;
    width: 10px;
    height: 10px;
    background: var(--green);
    border: 1px solid #fff;
  }

  .vscroll {
    display: flex;
    flex-direction: column;
    align-items: center;
    flex: 1;
    padding: 5px 5px 0 7px;
    box-sizing: border-box;
    height: 993px;
  }

  .sb-btn {
    display: flex;
    align-items: center;
    justify-content: center;
    flex: none;
    box-sizing: border-box;
    width: 30px;
    height: 30px;
    background: #fff;
    border: 2px solid #cfcfcf;
  }

  .tri {
    display: inline-block;
    width: 0;
    height: 0;
    border-style: solid;
  }

  .tri.up {
    border-width: 0 7px 8px;
    border-color: transparent transparent #888;
  }

  .tri.down {
    border-width: 8px 7px 0;
    border-color: #888 transparent transparent;
  }

  .tri.left {
    border-width: 8px 7px 8px 0;
    border-color: transparent #d0d0d0 transparent transparent;
  }

  .tri.right {
    border-width: 8px 0 8px 7px;
    border-color: transparent transparent transparent #d0d0d0;
  }

  .tri.dark.left {
    border-right-color: #888;
  }

  .tri.dark.right {
    border-left-color: #888;
  }

  .vtrack {
    flex: 1;
    width: 30px;
    background: #dcdcdc;
    padding-top: 314px;
    box-sizing: border-box;
  }

  .vthumb {
    box-sizing: border-box;
    width: 30px;
    height: 366px;
    background: #fff;
    border: 2px solid #cfcfcf;
  }

  /* sheet tabs */
  .tabbar {
    display: flex;
    align-items: center;
    box-sizing: border-box;
    height: 60px;
    flex: none;
    background: #e6e6e6;
    border-bottom: 2px solid #d2d2d2;
  }

  .tabbar > .tri.left {
    margin-left: 58px;
  }

  .tabbar > .tri.right {
    margin-left: 52px;
  }

  .sheet-tab {
    box-sizing: border-box;
    align-self: flex-start;
    width: 135px;
    height: 52px;
    margin-left: 89px;
    background: #fff;
    border: solid #b8b8b8;
    border-width: 0 2px;
    border-bottom: 4px solid var(--green);
    text-align: center;
    line-height: 54px;
    font-family: var(--cell);
    font-size: 27px;
    font-weight: 700;
    color: #3d7350;
  }

  .add {
    margin-left: 70px;
  }

  .dots.h {
    width: auto;
    margin-left: 1275px;
    padding-top: 0;
    gap: 4px;
  }

  .hscroll {
    display: flex;
    align-items: center;
    margin-left: 31px;
    height: 32px;
  }

  .htrack {
    box-sizing: border-box;
    width: 1008px;
    height: 32px;
    margin: 0 7px 0 2px;
    background: #dcdcdc;
  }

  .hthumb {
    box-sizing: border-box;
    width: 740px;
    height: 32px;
    background: #f1f1f1;
    border: 2px solid #bbb;
  }

  /* status bar */
  .status {
    display: flex;
    align-items: stretch;
    flex: 1;
    background: #f3f2f1;
  }

  .ready {
    align-self: center;
    margin-left: 18px;
    font-size: 23px;
    color: #666;
  }

  .view-btns {
    display: flex;
    margin-left: auto;
  }

  .view {
    display: flex;
    align-items: center;
    justify-content: center;
    width: 80px;
  }

  .view.on {
    background: #c8c8c8;
  }

  .zoomer {
    display: flex;
    align-items: center;
    width: 360px;
    padding-left: 12px;
    box-sizing: border-box;
  }

  .zm {
    position: relative;
    display: block;
    flex: none;
    width: 13px;
    height: 4px;
    background: #808080;
  }

  .zm.plus::after {
    content: "";
    position: absolute;
    left: 4.500px;
    top: -5px;
    width: 4px;
    height: 14px;
    background: #808080;
  }

  .zline {
    display: flex;
    align-items: center;
    justify-content: center;
    width: 210px;
    height: 2px;
    margin: 0 8px 0 9px;
    background: #b8b8b8;
  }

  .zthumb {
    display: block;
    width: 10px;
    height: 24px;
    background: #808080;
  }

  .zpct {
    margin-left: 25px;
    font-size: 22px;
    color: #666;
  }

  /* video player */
  .video-fade {
    height: 89px;
    flex: none;
    background: linear-gradient(#39704d, #203c2c);
  }

  .player {
    position: absolute;
    left: 0;
    right: 0;
    top: 1680px;
  }

  .player-row {
    display: flex;
    align-items: center;
    height: 60px;
  }

  .pause {
    display: flex;
    align-items: center;
    justify-content: center;
    gap: 5px;
    flex: none;
    width: 60px;
    height: 60px;
    margin: -4px 0 0 24px;
    padding: 0;
    border: none;
    border-radius: 50%;
    background: rgba(225, 225, 225, 0.78);
  }

  .pause i {
    width: 11px;
    height: 29px;
    border-radius: 2px;
    background: #2b6a98;
  }

  .progress {
    width: 2748px;
    height: 20px;
    margin-left: 24px;
    border-radius: 4px;
    background: rgba(255, 255, 255, 0.3);
    overflow: hidden;
  }

  .played {
    height: 100%;
    background: #2b6a98;
  }

  .player-row.lower {
    height: 37px;
    padding: 0 29px 0 108px;
  }

  .time {
    font-family: "Liberation Sans", sans-serif;
    font-size: 29px;
    color: #fff;
    margin-right: auto;
  }

  .cc {
    display: flex;
    align-items: center;
    justify-content: center;
    width: 38px;
    height: 37px;
    border-radius: 5px;
    background: #fff;
    color: #000;
    font-family: "Liberation Sans", sans-serif;
    font-size: 23px;
    font-weight: 400;
    -webkit-text-stroke: 0.5px #000;
  }

  .speaker {
    margin-left: 34px;
  }

  .exit-fs {
    margin-left: 28px;
  }
</style>
